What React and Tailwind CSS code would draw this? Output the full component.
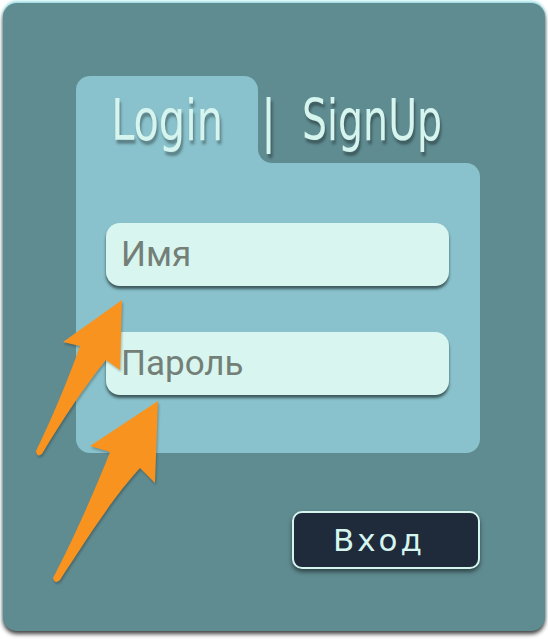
import React from "react";

const Arrows = () => (
  <svg
    className="absolute left-0 top-0 pointer-events-none [filter:drop-shadow(1px_2px_1px_rgba(0,0,0,0.25))]"
    width="548"
    height="639"
    viewBox="0 0 548 639"
  >
    {/* upper arrow, points at the name field */}
    <path
      d="M122 300 L63 342 L80 346 C68 380 52 418 36 451 Q37 458 42 454 C62 420 85 386 106 360 L120 370 Z"
      fill="#f8931f"
    />
    {/* lower arrow, points at the password field */}
    <path
      d="M158 401 L90 446 L110 452 C95 490 74 538 53 578 Q55 585 60 580 C86 540 114 496 140 468 L155 483 Z"
      fill="#f8931f"
    />
  </svg>
);

const Field = ({ placeholder }) => (
  <input
    type="text"
    placeholder={placeholder}
    className="w-full h-[63px] rounded-[14px] bg-[#d8f6ef] px-[15px] text-[35px] text-[#37433b] placeholder:text-[#737f77] outline-none shadow-[0_3px_3px_rgba(0,0,0,0.55)] font-['Roboto',sans-serif]"
  />
);

export default function App() {
  return (
    <div className="relative w-[548px] h-[639px] bg-white pt-[3px] px-[3px] pb-[8px]">
      <div className="h-full rounded-[14px] bg-[#5f8c91] pl-[73px] pt-[73px] shadow-[0_3px_4px_rgba(0,0,0,0.75),0_-2px_3px_rgba(150,225,232,0.9)]">
        <div className="w-[404px]">
          {/* Tabs */}
          <div className="flex h-[87px] font-['DejaVu_Sans_Condensed','DejaVu_Sans',sans-serif] text-[#d6f5ef] [text-shadow:2px_4px_3px_rgba(0,0,0,0.35)]">
            <div className="w-[182px] shrink-0 rounded-t-[14px] bg-[#89c2cc] flex items-center justify-center pt-[2px]">
              <span className="inline-block text-[57px] leading-none scale-x-[0.81]">Login</span>
            </div>
            <div className="flex-1 bg-[#89c2cc]">
              <div className="h-full bg-[#5f8c91] rounded-bl-[14px] flex items-center pl-[2px] pt-[2px]">
                <span className="inline-block text-[57px] leading-none scale-x-[0.9]">|</span>
                <span className="inline-block text-[57px] leading-none origin-left scale-x-[0.77] translate-x-[25px]">SignUp</span>
              </div>
            </div>
          </div>

          {/* Form body */}
          <div className="h-[290px] bg-[#89c2cc] rounded-tr-[14px] rounded-b-[14px] pt-[60px] pl-[30px] pr-[31px] flex flex-col gap-[46px]">
            <Field placeholder="Имя" />
            <Field placeholder="Пароль" />
          </div>

          <div className="flex justify-end mt-[58px]">
            <button className="w-[188px] h-[58px] rounded-[10px] border-2 border-[#d6f5ef] bg-[#1f2a3b] text-[#d6f5ef] text-[31px] tracking-[3px] pr-[14px] font-['DejaVu_Sans',sans-serif] shadow-[0_3px_4px_rgba(0,0,0,0.5)]">
              Вход
            </button>
          </div>
        </div>
      </div>
      <Arrows />
    </div>
  );
}
